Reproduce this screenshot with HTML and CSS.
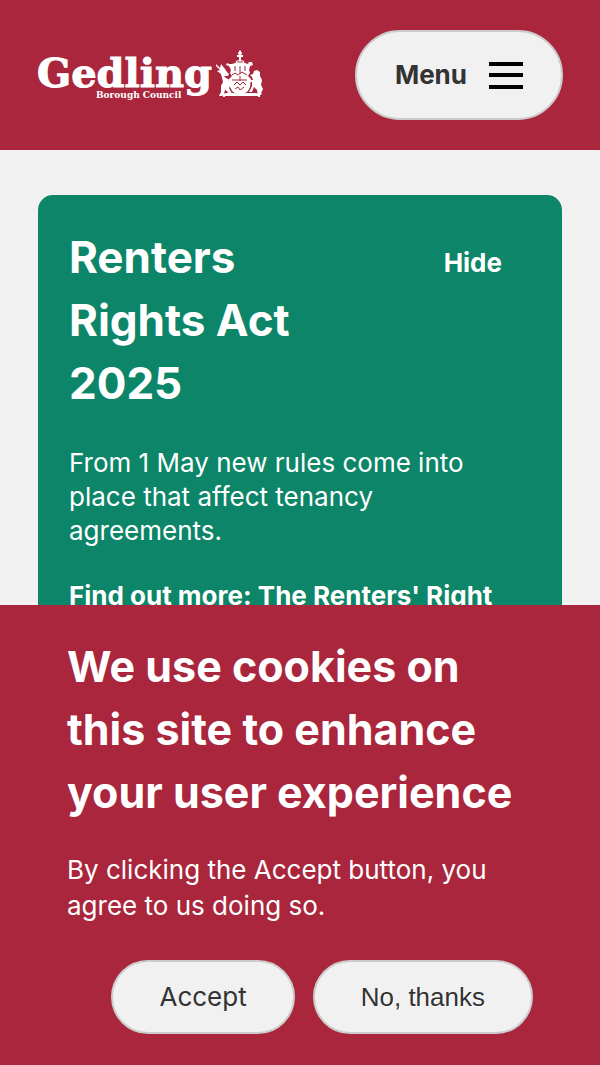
FILE: index.html
```
<!DOCTYPE html>
<html lang="en">

<head>
    <meta charset="UTF-8" />
    <meta name="viewport" content="width=device-width, initial-scale=1.0" />
    <title>Gedling Borough Council</title>
    <link rel="stylesheet" href="styles.css">
</head>

<body>
    <header class="site-header">
        <a href="#" class="logo" aria-label="Gedling Borough Council home">
            <svg width="226" height="54" viewBox="0 0 226 54" fill="#fff">
                <text class="logo-name" x="0" y="39">Gedling</text>
                <text class="logo-sub" x="59" y="50">Borough Council</text>
                <!-- coat of arms -->
                <g>
                    <path d="M203 2l2 3-1 2h2v2h-2v3l3 1 1 4h-10l1-4 3-1V9h-2V7h2l-1-2z" />
                    <path d="M195 16l3-1 2 2h6l2-2 3 1 1-2h3l1 3-3 1-1 4 1 3-2 3 3 3-1 8-2 4-4 3-4 1-4-1-4-3-2-4-1-8 3-3-2-3 1-3-2-4-3-1 1-2 2 1z" />
                    <path d="M179 16l4 4 1-4 4 5 2 3 2 2-1 2h-4l2 2 4 2 1 4-2 4 2 4 2 3h-4l-2-4-2-1-1 4-2 2h-3l2-4v-6l2-4-1-4-1-4-4-3 3-1-4-4z" />
                    <path d="M215 29l-2-2 3-1 1-3 3-1 3 2v4l2 4-1 5 2 4-2 4h1l-1 2h-3l-1-5-3-3-2 5h-3l3-6v-4h-3v-2h4z" />
                    <path d="M186 46l3-1h7l7 1 7-1h9l4 1v3h-2v-1h-33v1h-2z" />
                    <path d="M198 18v5m5-5v8m5-8v5M195 27l3-2 3 2 4-3 5 3M195 32h15M197 37l3-3 3 3 3-3 3 3M198 41l3-2 2 3 4-3M203 28v5M200 14h6" fill="none" stroke="#a8263c" stroke-width="1" />
                </g>
            </svg>
        </a>
        <button class="pill menu-btn" type="button">
            Menu
            <svg width="34" height="27" viewBox="0 0 34 27" aria-hidden="true">
                <path d="M0 2h34M0 13h34M0 25h34" stroke="#000" stroke-width="4" />
            </svg>
        </button>
    </header>

    <main class="content">
        <section class="notice">
            <div class="notice-head">
                <h2>Renters Rights Act 2025</h2>
                <button class="hide-btn" type="button">Hide</button>
            </div>
            <p>From 1 May new rules come into place that affect tenancy agreements.</p>
            <p><a href="#">Find out more: The Renters' Right</a></p>
        </section>
    </main>

    <div class="cookies" role="dialog" aria-labelledby="cookies-title">
        <h2 id="cookies-title">We use cookies on this site to enhance your user experience</h2>
        <p>By clicking the Accept button, you agree to us doing so.</p>
        <div class="cookies-actions">
            <button class="pill" type="button">Accept</button>
            <button class="pill decline" type="button">No, thanks</button>
        </div>
    </div>
</body>

</html>
```
FILE: styles.css
```
* {
    padding: 0;
    margin: 0;
    box-sizing: border-box;
}

body {
    background-color: #f1f1f1;
    color: #fff;
    font-family: Inter, "Liberation Sans", sans-serif;
    font-size: 26px;
    line-height: 34px;
}

h2 {
    font-size: 44px;
    line-height: 63px;
    font-weight: 700;
}

button {
    font: inherit;
    cursor: pointer;
}

.site-header {
    display: flex;
    justify-content: space-between;
    align-items: center;
    padding: 30px 37px;
    background-color: #a9263d;
}

.logo svg {
    display: block;
}

.logo-name {
    font: bold 40px "DejaVu Serif", serif;
    stroke: #fff;
    stroke-width: 1px;
}

.logo-sub {
    font: bold 9px "DejaVu Serif", serif;
}

.pill {
    padding: 18px 46px;
    background-color: #f1f1f1;
    border: 2px solid #ccc;
    border-radius: 45px;
    color: #333;
}

.menu-btn {
    display: flex;
    align-items: center;
    gap: 22px;
    padding: 26px 38px;
    font-weight: 700;
}

.content {
    padding: 45px 38px;
}

.notice {
    padding: 31px;
    background-color: #0c8568;
    border-radius: 15px;
}

.notice p {
    margin-top: 31px;
}

.notice a {
    color: #fff;
    font-weight: 700;
    text-decoration: none;
}

.notice-head {
    display: flex;
    justify-content: space-between;
    align-items: flex-start;
}

.notice-head h2 {
    width: 50%;
}

.hide-btn {
    padding: 20px 29px;
    background: none;
    border: none;
    color: #fff;
    font-weight: 700;
}

.cookies {
    position: fixed;
    left: 0;
    right: 0;
    bottom: 0;
    padding: 30px 67px 31px;
    background-color: #a9263d;
}

.cookies h2 {
    font-size: 43px;
}

.cookies p {
    margin: 28px 0 36px;
    line-height: 36px;
}

.cookies-actions {
    display: flex;
    justify-content: flex-end;
    gap: 18px;
}

.decline {
    font-family: "Liberation Sans", Arial, sans-serif;
    text-shadow: 1px 1px 0 #fff;
}
```
